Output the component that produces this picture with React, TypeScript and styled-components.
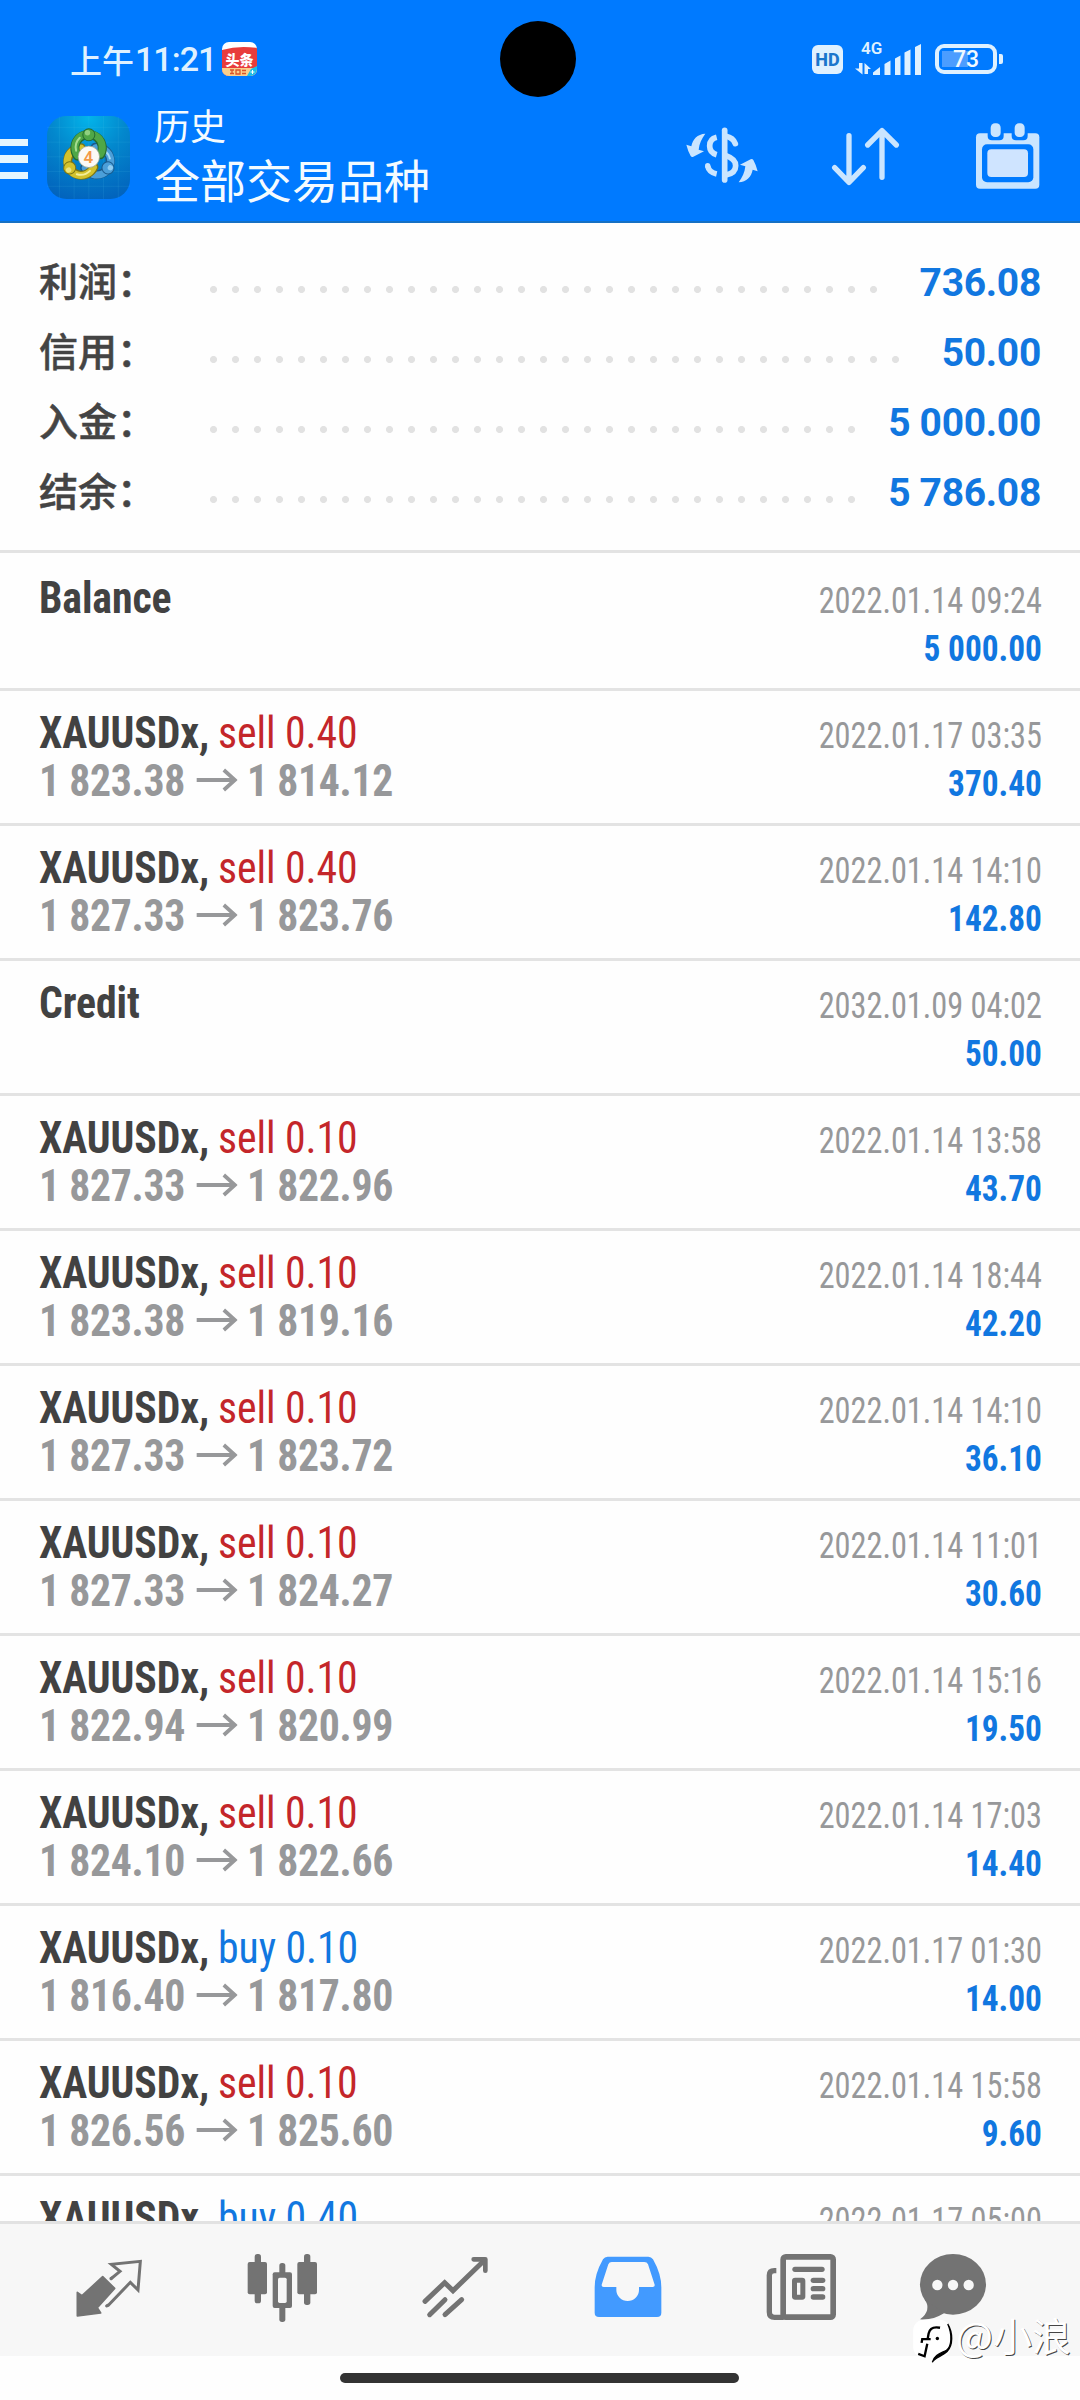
import React from 'react';
import styled, { createGlobalStyle } from 'styled-components';

const BLUE = '#007aff';
const VALUE_BLUE = '#1177e0';
const RED = '#c4262a';
const LINE = '#e3e3e3';
const ICON_GREY = '#737373';
const PALE = '#cae5ff';
const STATUS = '#dff1ff';
const CJK = "'Noto Sans CJK SC', sans-serif";
const CONDENSED = "'Roboto Condensed', Roboto, sans-serif";

const GlobalStyle = createGlobalStyle`
  * { box-sizing: border-box; }
  body { margin: 0; background: #fefefe; }
  svg { display: block; flex: none; }
`;

const Screen = styled.div`
  position: relative;
  width: 1080px;
  height: 2400px;
  overflow: hidden;
  display: flex;
  flex-direction: column;
  background: #fefefe;
  font-family: Roboto, sans-serif;
`;

const Header = styled.header`
  flex: none;
  height: 223px;
  background: ${BLUE};
  border-bottom: 2px solid #1670c4;
  display: flex;
  flex-direction: column;
`;

const StatusBar = styled.div`
  height: 98px;
  display: flex;
  justify-content: space-between;
  align-items: center;
  padding: 20px 77px 0 70px;
`;

const StatusGroup = styled.div`
  display: flex;
  align-items: center;
`;

const DayPart = styled.span`
  font: 500 32px/40px ${CJK};
  color: ${STATUS};
`;

const Clock = styled.span`
  width: 85px;
  font: 500 34px/40px Roboto, sans-serif;
  letter-spacing: -1px;
  color: ${STATUS};
  margin: 0 2px 0 1px;
`;

const HdBadge = styled.span`
  width: 31px;
  height: 29px;
  border-radius: 6px;
  background: ${STATUS};
  color: #1b76cc;
  font: 800 18px/29px Roboto, sans-serif;
  text-align: center;
  margin-right: 10px;
`;

const Battery = styled.span`
  width: 62px;
  height: 30px;
  margin-left: 13px;
  border: 4px solid ${STATUS};
  border-radius: 9px;
  background: linear-gradient(#4c9dff, #4c9dff) 3px 3px / 26px 16px no-repeat;
  color: #f0f9ff;
  font: 500 23px/23px Roboto, sans-serif;
  text-align: center;
`;

const BatteryTip = styled.span`
  width: 4px;
  height: 10px;
  margin-left: 2px;
  border-radius: 0 2px 2px 0;
  background: ${STATUS};
`;

const Camera = styled.div`
  position: absolute;
  left: 500px;
  top: 21px;
  width: 76px;
  height: 76px;
  border-radius: 50%;
  background: #000;
`;

const Toolbar = styled.div`
  flex: 1;
  display: flex;
  align-items: flex-start;
  padding-right: 35.7px;
`;

const MenuButton = styled.div`
  width: 27.5px;
  margin-top: 41px;
  display: flex;
  flex-direction: column;
  gap: 9.3px;
`;

const MenuLine = styled.span`
  height: 7.2px;
  background: #e6f6ff;
`;

const AppLogo = styled.div`
  margin: 18px 0 0 19px;
`;

const Titles = styled.div`
  flex: 1;
  margin-left: 24.5px;
  padding-top: 3px;
  color: #f4fbff;
  font-family: ${CJK};
`;

const Caption = styled.div`
  font-size: 36px;
  line-height: 46px;
`;

const Title = styled.div`
  font-size: 46px;
  line-height: 63px;
`;

const Action = styled.div<{ $gap: number }>`
  margin: 20px 0 0 ${(p) => p.$gap}px;
`;

const Summary = styled.section`
  flex: none;
  padding: 25px 39px 22px;
  border-bottom: 3px solid ${LINE};
`;

const SummaryRow = styled.div`
  height: 70px;
  display: flex;
  align-items: baseline;
`;

const SummaryLabel = styled.span`
  width: 171px;
  font: 500 39px/62.6px ${CJK};
  color: #444;
  -webkit-text-stroke: 0.5px #444;
`;

const Leader = styled.span<{ $dots: number }>`
  align-self: flex-start;
  width: ${(p) => p.$dots * 22}px;
  height: 8px;
  margin-top: 38px;
  background: radial-gradient(circle at 3.5px 3.5px, #e2e2e2 3.1px, transparent 3.9px) 0 0 / 22px 8px;
`;

const SummaryValue = styled.span`
  margin-left: auto;
  font-weight: 700;
  font-size: 39px;
  line-height: 70px;
  letter-spacing: -0.3px;
  color: ${VALUE_BLUE};
`;

const List = styled.main`
  flex: 1;
  min-height: 0;
  overflow: hidden;
`;

const Row = styled.div`
  height: 135px;
  padding: 19px 38px 0 39px;
  border-bottom: 3px solid ${LINE};
  display: flex;
  justify-content: space-between;
  font-family: ${CONDENSED};
  &:first-child {
    height: 138px;
    padding-top: 22px;
  }
`;

const Deal = styled.div`
  font-size: 43.5px;
  line-height: 48px;
  white-space: nowrap;
  transform: scaleX(0.96);
  transform-origin: left;
`;

const DealTitle = styled.div`
  display: flex;
  gap: 9.4px;
  letter-spacing: -0.1px;
`;

const Symbol = styled.span`
  font-weight: 700;
  color: #424242;
`;

const Side = styled.span<{ $buy: boolean }>`
  color: ${(p) => (p.$buy ? VALUE_BLUE : RED)};
`;

const Prices = styled.div`
  display: flex;
  align-items: center;
  font-weight: 700;
  letter-spacing: -0.3px;
  color: #97989a;
  svg {
    margin: -5px 10px 0 11.5px;
  }
`;

const Meta = styled.div`
  padding-top: 2px;
  font-size: 36px;
  line-height: 48px;
  text-align: right;
  white-space: nowrap;
`;

const Time = styled.div`
  color: #97989a;
  transform: scaleX(0.897);
  transform-origin: right;
`;

const Amount = styled.div`
  font-weight: 700;
  color: ${VALUE_BLUE};
  transform: scaleX(0.925);
  transform-origin: right;
`;

const TabBar = styled.nav`
  flex: none;
  height: 135px;
  border-top: 3px solid #e2e2e2;
  background: #f7f7f7;
  display: flex;
  padding: 22px 0 0 22px;
`;

const Tab = styled.div<{ $last?: boolean }>`
  width: ${(p) => (p.$last ? 131 : 173)}px;
  display: flex;
  justify-content: center;
  align-items: flex-start;
`;

const HomeArea = styled.footer`
  flex: none;
  height: 44px;
  padding: 17px 1px 0 0;
  display: flex;
  justify-content: center;
`;

const HomeBar = styled.div`
  width: 399px;
  height: 10px;
  border-radius: 5px;
  background: #333;
`;

const Watermark = styled.div`
  position: absolute;
  left: 912px;
  top: 2318px;
  display: flex;
  align-items: flex-start;
`;

const WatermarkText = styled.span`
  margin: -2px 0 0 0;
  font: 400 39px/36px ${CJK};
  color: #fff;
  text-shadow: 1px 1px 0 rgba(20, 20, 20, 0.8);
`;

const NewsBadge = () => (
  <svg width="35" height="34" viewBox="0 0 35 34">
    <defs>
      <clipPath id="badge"><rect width="35" height="34" rx="7" /></clipPath>
    </defs>
    <g clipPath="url(#badge)">
      <rect width="35" height="34" fill="#fff" />
      <path d="M0 8Q17 3 35 6V34H0Z" fill="#e83c3c" />
      <rect y="26" width="35" height="8" fill="#f9cf8c" />
      <text x="3.5" y="22.5" fontFamily="Noto Sans CJK SC" fontWeight="900" fontSize="14" fill="#fff">头条</text>
      <path d="M8 28h4M8 31.5h4M10 28v4M14 28h4v4h-4zM20 28.5h4M20 31.5h4" stroke="#d9542b" strokeWidth="1.3" fill="none" />
      <path d="M25 34L29 27L35 24V34Z" fill="#18bfe8" />
      <path d="M28.500 30h4M30.500 28v4" stroke="#fff" strokeWidth="1" />
    </g>
  </svg>
);

const Signal = () => (
  <svg width="69" height="54" viewBox="853 32 69 54" fill={STATUS}>
    <text x="861" y="54" fontFamily="Roboto" fontWeight="600" fontSize="17">4G</text>
    <path d="M862.500 63V74.500L855 68.500H859V63ZM864.500 74V63L871 69H868V74Z" />
    <path d="M873 75V72.500L880 67V75ZM884.500 75V64L890.500 60.500V75ZM895 75V58.500L900.500 55.500V75ZM904.500 75V52.500L910.500 49.500V75ZM915 75V47L921 44V75Z" />
  </svg>
);

const Figure = ({ turn, dark, base, light }: { turn: number; dark: string; base: string; light: string }) => (
  <g transform={`rotate(${turn} 175 170)`}>
    <path d="M141 168A41 41 0 1 1 210 164" fill="none" stroke={dark} strokeWidth="27" strokeLinecap="round" />
    <path d="M141 166A41 41 0 1 1 210 162" fill="none" stroke={base} strokeWidth="21" strokeLinecap="round" />
    <path d="M137 152A40 40 0 0 1 148 113" fill="none" stroke={light} strokeWidth="6" strokeLinecap="round" />
    <circle cx="175" cy="104" r="18" fill={base} stroke={dark} strokeWidth="3" />
    <circle cx="171" cy="98" r="8" fill={light} opacity="0.75" />
  </g>
);

const Mt4Logo = () => (
  <svg width="83" height="83" viewBox="50 48 248 248">
    <defs>
      <radialGradient id="sky" cx="0.5" cy="0.02" r="1">
        <stop offset="0" stopColor="#03b4ea" />
        <stop offset="0.45" stopColor="#0388cd" />
        <stop offset="1" stopColor="#0264bd" />
      </radialGradient>
    </defs>
    <rect x="50" y="48" width="248" height="248" rx="58" fill="url(#sky)" />
    <path d="M87 50V294M131 48V296M175 48V296M219 48V296M263 50V294M50 82H298M50 126H298M50 170H298M50 214H298M50 258H298" stroke="#5cc8f2" strokeOpacity="0.18" strokeWidth="2" />
    <Figure turn={120} dark="#1a5a8c" base="#4b9fd9" light="#a8dcf8" />
    <Figure turn={240} dark="#7b7414" base="#d3c22d" light="#f4ef9a" />
    <Figure turn={0} dark="#246b32" base="#4fa747" light="#a5dd91" />
    <circle cx="175" cy="170" r="32" fill="#fbfaf6" stroke="#8d9a83" strokeWidth="2" />
    <text x="174" y="188" fontFamily="Roboto" fontWeight="600" fontSize="51" textAnchor="middle" fill="#f39a48">4</text>
  </svg>
);

const SWOOSH = 'M136 71C112 72 98 88 94 109L79 104Q84 124 92 138Q95 142 100 140L132 124L116 119C118 100 125 86 136 71Z';

const CurrencyIcon = () => (
  <svg width="84" height="76" viewBox="60 24 252 228" fill="none" stroke={PALE} strokeWidth="17">
    <path d={SWOOSH} fill={PALE} stroke="none" />
    <path d={SWOOSH} fill={PALE} stroke="none" transform="rotate(180 186 144)" />
    <path d="M194 61V210" strokeLinecap="round" />
    <path d="M198 79Q219 83 226 101" strokeLinecap="round" />
    <path d="M198 137Q227 147 227 167Q227 189 198 195" />
    <path d="M170 82Q149 87 149 108Q149 128 170 134" />
    <path d="M143 168Q147 187 170 192" />
    <circle cx="143" cy="167" r="8" fill={PALE} stroke="none" />
  </svg>
);

const SortIcon = () => (
  <svg width="76" height="76" viewBox="500 24 228 228" fill="none" stroke={PALE} strokeWidth="16" strokeLinecap="round" strokeLinejoin="round">
    <path d="M566 77V217M523 173L566 217L609 173M665 202V62M622 105L665 62L708 105" />
  </svg>
);

const CalendarIcon = () => (
  <svg width="72" height="76" viewBox="937 24 216 228" fill={PALE}>
    <rect x="949" y="70" width="190" height="166" rx="12" />
    <path d="M984 68H1032V78Q1032 91 1019 91H997Q984 91 984 78ZM1056 68H1104V78Q1104 91 1091 91H1069Q1056 91 1056 78Z" fill={BLUE} />
    <rect x="967" y="103" width="154" height="114" rx="15" fill={BLUE} />
    <rect x="993" y="40" width="30" height="41" rx="13" />
    <rect x="1065" y="40" width="30" height="41" rx="13" />
    <rect x="983" y="118" width="122" height="83" rx="12" fill="#cfe4ff" />
  </svg>
);

const PriceArrow = () => (
  <svg width="43" height="24" viewBox="0 0 43 24" fill="none" stroke="#97989a" strokeWidth="3.900">
    <path d="M0 12H40.500M28.500 2L40 12L28.500 22" />
  </svg>
);

const QuotesIcon = () => (
  <svg width="80" height="80" viewBox="26 6 240 240">
    <path d="M127 98L163 133L111 191L121 207L51 216V145L65 155Z" fill={ICON_GREY} stroke={ICON_GREY} strokeWidth="5" strokeLinejoin="round" />
    <path d="M151 105L179 82L153 61L240 52L233 138L210 115L142 186" fill="none" stroke={ICON_GREY} strokeWidth="9" />
    <path d="M152 104L154 102M139 186L142 184" stroke={ICON_GREY} strokeWidth="9" strokeLinecap="round" />
  </svg>
);

const ChartIcon = () => (
  <svg width="80" height="80" viewBox="542 6 240 240" fill={ICON_GREY}>
    <rect x="580" y="30" width="19" height="148" rx="8" />
    <rect x="559" y="54" width="58" height="97" rx="6" />
    <rect x="654" y="57" width="18" height="177" rx="8" />
    <rect x="634" y="85" width="58" height="107" rx="6" />
    <rect x="650" y="101" width="26" height="76" rx="5" fill="#f7f7f7" />
    <rect x="728" y="30" width="19" height="153" rx="8" />
    <rect x="708" y="54" width="59" height="97" rx="6" />
  </svg>
);

const TradeIcon = () => (
  <svg width="80" height="80" viewBox="1062 6 240 240" fill="none" stroke={ICON_GREY} strokeWidth="15" strokeLinecap="round">
    <path d="M1092 172L1151 116L1176 140L1268 51" />
    <path d="M1238 46H1273V80" strokeWidth="14" strokeLinejoin="round" />
    <path d="M1106 212L1152 167" />
    <path d="M1152 212L1202 167" />
  </svg>
);

const HistoryIcon = () => (
  <svg width="80" height="80" viewBox="23 6 240 240">
    <path
      fill="#429aff"
      fillRule="evenodd"
      d="M82 38H204Q213 38 218 46Q243 90 243 130V206Q243 219 230 219H56Q43 219 43 206V130Q43 90 68 46Q73 38 82 38ZM94 54Q87 54 84 61L64 122Q63 129 70 129H108V138A34 33 0 0 0 176 138V129H217Q224 129 223 122L203 61Q200 54 192 54Z"
    />
  </svg>
);

const NewsIcon = () => (
  <svg width="80" height="80" viewBox="542 6 240 240" fill={ICON_GREY}>
    <path d="M588 80H582Q567 80 567 94V204Q567 220 583 220H610" fill="none" stroke={ICON_GREY} strokeWidth="16" />
    <rect x="608.500" y="38.500" width="150" height="181" rx="8" fill="none" stroke={ICON_GREY} strokeWidth="17" />
    <rect x="636" y="68" width="97" height="16" rx="8" />
    <rect x="642.500" y="108.500" width="25" height="51" rx="2" fill="none" stroke={ICON_GREY} strokeWidth="15" strokeLinejoin="round" />
    <rect x="691" y="101" width="44" height="16" rx="8" />
    <rect x="691" y="126" width="44" height="16" rx="8" />
    <rect x="691" y="151" width="44" height="16" rx="8" />
  </svg>
);

const ChatIcon = () => (
  <svg width="80" height="80" viewBox="999 6 240 240" fill={ICON_GREY}>
    <ellipse cx="1119" cy="121" rx="99" ry="91" />
    <path d="M1034 165Q1056 200 1020 226Q1056 230 1092 208Z" />
    <g fill="#f7f7f7">
      <circle cx="1072" cy="123" r="15.500" />
      <circle cx="1119" cy="123" r="15.500" />
      <circle cx="1166" cy="123" r="15.500" />
    </g>
  </svg>
);

const WatermarkLogo = () => (
  <svg width="44" height="47" viewBox="1000 226 130 140" fill="none" stroke="#000">
    <rect x="1003" y="231" width="111" height="114" rx="32" fill="#fff" stroke="none" />
    <path d="M1083 255Q1054 249 1049 272L1046 289M1028 300L1030 289H1055M1045 303L1037 340L1018 333" strokeWidth="7" />
    <path d="M1106 244C1120 275 1118 312 1102 322C1088 330 1066 334 1060 358C1066 344 1090 340 1104 326C1122 308 1122 270 1106 244Z" fill="#000" strokeWidth="4" />
    <circle cx="1075" cy="287" r="5" fill="#000" stroke="none" />
  </svg>
);

const summary = [
  { label: '利润：', value: '736.08', dots: 31 },
  { label: '信用：', value: '50.00', dots: 32 },
  { label: '入金：', value: '5 000.00', dots: 30 },
  { label: '结余：', value: '5 786.08', dots: 30 },
];

type Entry = { name: string; side?: string; from?: string; to?: string; time: string; amount: string };

const trade = (side: string, from: string, to: string, time: string, amount: string): Entry => ({
  name: 'XAUUSDx,', side, from, to, time, amount,
});

const entries: Entry[] = [
  { name: 'Balance', time: '2022.01.14 09:24', amount: '5 000.00' },
  trade('sell 0.40', '1 823.38', '1 814.12', '2022.01.17 03:35', '370.40'),
  trade('sell 0.40', '1 827.33', '1 823.76', '2022.01.14 14:10', '142.80'),
  { name: 'Credit', time: '2032.01.09 04:02', amount: '50.00' },
  trade('sell 0.10', '1 827.33', '1 822.96', '2022.01.14 13:58', '43.70'),
  trade('sell 0.10', '1 823.38', '1 819.16', '2022.01.14 18:44', '42.20'),
  trade('sell 0.10', '1 827.33', '1 823.72', '2022.01.14 14:10', '36.10'),
  trade('sell 0.10', '1 827.33', '1 824.27', '2022.01.14 11:01', '30.60'),
  trade('sell 0.10', '1 822.94', '1 820.99', '2022.01.14 15:16', '19.50'),
  trade('sell 0.10', '1 824.10', '1 822.66', '2022.01.14 17:03', '14.40'),
  trade('buy 0.10', '1 816.40', '1 817.80', '2022.01.17 01:30', '14.00'),
  trade('sell 0.10', '1 826.56', '1 825.60', '2022.01.14 15:58', '9.60'),
  trade('buy 0.40', '', '', '2022.01.17 05:00', ''),
];

export default function App() {
  return (
    <Screen lang="zh-CN">
      <GlobalStyle />
      <Header>
        <StatusBar>
          <StatusGroup>
            <DayPart>上午</DayPart>
            <Clock>11:21</Clock>
            <NewsBadge />
          </StatusGroup>
          <StatusGroup>
            <HdBadge>HD</HdBadge>
            <Signal />
            <Battery>73</Battery>
            <BatteryTip />
          </StatusGroup>
        </StatusBar>
        <Toolbar>
          <MenuButton>
            <MenuLine />
            <MenuLine />
            <MenuLine />
          </MenuButton>
          <AppLogo><Mt4Logo /></AppLogo>
          <Titles>
            <Caption>历史</Caption>
            <Title>全部交易品种</Title>
          </Titles>
          <Action $gap={0}><CurrencyIcon /></Action>
          <Action $gap={62.7}><SortIcon /></Action>
          <Action $gap={69.6}><CalendarIcon /></Action>
        </Toolbar>
      </Header>
      <Summary>
        {summary.map((s) => (
          <SummaryRow key={s.label}>
            <SummaryLabel>{s.label}</SummaryLabel>
            <Leader $dots={s.dots} />
            <SummaryValue>{s.value}</SummaryValue>
          </SummaryRow>
        ))}
      </Summary>
      <List>
        {entries.map((e) => (
          <Row key={e.time + e.amount}>
            <Deal>
              <DealTitle>
                <Symbol>{e.name}</Symbol>
                {e.side && <Side $buy={e.side.startsWith('buy')}>{e.side}</Side>}
              </DealTitle>
              {e.from && (
                <Prices>
                  <span>{e.from}</span>
                  <PriceArrow />
                  <span>{e.to}</span>
                </Prices>
              )}
            </Deal>
            <Meta>
              <Time>{e.time}</Time>
              <Amount>{e.amount}</Amount>
            </Meta>
          </Row>
        ))}
      </List>
      <TabBar>
        <Tab><QuotesIcon /></Tab>
        <Tab><ChartIcon /></Tab>
        <Tab><TradeIcon /></Tab>
        <Tab><HistoryIcon /></Tab>
        <Tab><NewsIcon /></Tab>
        <Tab $last><ChatIcon /></Tab>
      </TabBar>
      <HomeArea><HomeBar /></HomeArea>
      <Camera />
      <Watermark>
        <WatermarkLogo />
        <WatermarkText>@小浪</WatermarkText>
      </Watermark>
    </Screen>
  );
}
